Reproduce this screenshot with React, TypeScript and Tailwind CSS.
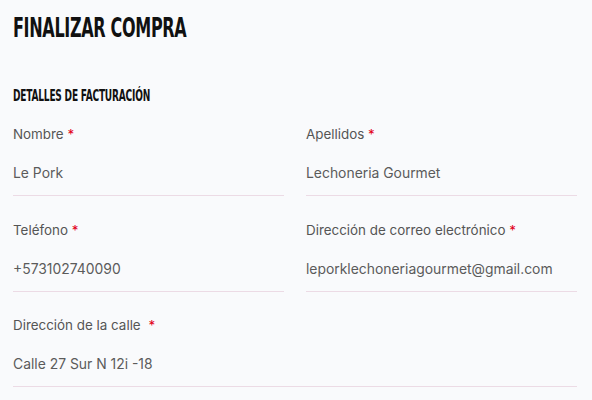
const Field = ({ label, value, gap = false }: { label: string; value: string; gap?: boolean }) => (
  <div className="flex flex-col">
    <label className="h-5 text-[13.4px] leading-5 text-[#555]">
      {label}{" "}
      <span className={gap ? "ml-[4px] text-[#e2001a]" : "text-[#e2001a]"}>*</span>
    </label>
    <div className="mt-2 h-[44px] flex items-center border-b border-[#ecdbe5] text-[13.9px] text-[#5b5b5b]">
      {value}
    </div>
  </div>
);

const display = { fontFamily: "'DejaVu Sans Condensed', 'Liberation Sans', sans-serif" };

export default function App() {
  return (
    <div
      className="w-[592px] h-[400px] bg-[#f9fafc] px-[13px] overflow-hidden"
      style={{ fontFamily: "Inter, 'Noto Sans', sans-serif" }}
    >
      <h1
        className="pt-[13px] text-[27px] leading-[30px] font-bold uppercase text-[#111] tracking-[-0.5px] origin-left scale-x-[0.66]"
        style={display}
      >
        Finalizar compra
      </h1>
      <h2
        className="mt-[44px] text-[15px] leading-[18px] font-bold uppercase text-[#111] tracking-[-0.3px] origin-left scale-x-[0.67]"
        style={display}
      >
        Detalles de facturación
      </h2>
      <div className="mt-[19px] grid grid-cols-2 gap-x-[22px] gap-y-[23.5px] pr-[2px]">
        <Field label="Nombre" value="Le Pork" />
        <Field label="Apellidos" value="Lechoneria Gourmet" />
        <Field label="Teléfono" value="+573102740090" />
        <Field label="Dirección de correo electrónico" value="leporklechoneriagourmet@gmail.com" />
        <div className="col-span-2">
          <Field label="Dirección de la calle" value="Calle 27 Sur N 12i -18" gap />
        </div>
      </div>
    </div>
  );
}
